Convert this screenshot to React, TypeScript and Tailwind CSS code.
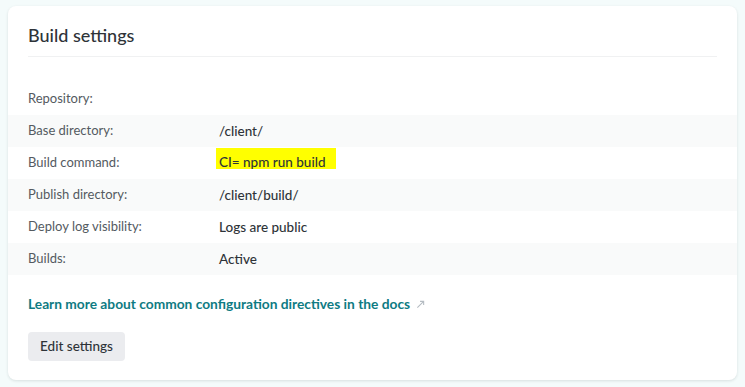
const rows = [
  { label: "Repository:", value: "" },
  { label: "Base directory:", value: "/client/" },
  { label: "Build command:", value: "CI= npm run build", highlight: true },
  { label: "Publish directory:", value: "/client/build/" },
  { label: "Deploy log visibility:", value: "Logs are public" },
  { label: "Builds:", value: "Active" },
];

export default function App() {
  return (
    <div className="min-h-screen bg-[#f4fbfb] px-[8px] pt-[6px] pb-[7px] font-['Lato',sans-serif] text-[#2e3338]">
      <div className="rounded-[8px] bg-white shadow-[0_1px_3px_rgba(14,30,37,0.12)]">
        <div className="px-[20px] pt-[17px]">
          <h2 className="text-[18px] leading-[24px] font-medium text-[#2e3338]">Build settings</h2>
          <div className="mt-[9px] h-px bg-[#f0f1f2]" />
        </div>
        <dl className="mt-[26px]">
          {rows.map((row, i) => (
            <div
              key={row.label}
              className={`flex h-[32px] items-center px-[20px] text-[13px] ${i % 2 === 1 ? "bg-[#f9fafa]" : "bg-white"}`}
            >
              <dt className="w-[191px] text-[#545a61]">{row.label}</dt>
              {row.highlight ? (
                <dd className="-ml-[3px] mt-[1px] self-start">
                  <span className="block h-[21px] w-[120px] bg-[#ffff00] pt-[6px] pl-[3px] text-[13.5px] leading-[16px] font-medium text-[#2e3338]">{row.value}</span>
                </dd>
              ) : (
                <dd className="text-[13.5px] font-medium text-[#2e3338]">{row.value}</dd>
              )}
            </div>
          ))}
        </dl>
        <div className="px-[20px] pt-[20px] pb-[19px]">
          <a href="#" className="flex items-center gap-[6px] text-[13.75px] leading-[18px] font-bold text-[#0e7b83]">
            Learn more about common configuration directives in the docs
            <svg width="9" height="9" viewBox="0 0 10 10" fill="none" stroke="#b5bcc2" strokeWidth="1.2">
              <path d="M1.5 8.5 8.5 1.5M4.5 1.5h4v4" />
            </svg>
          </a>
          <button className="mt-[19px] h-[29px] w-[97px] rounded-[4px] bg-[#ebecef] text-[13.5px] font-medium text-[#2e3338]">
            Edit settings
          </button>
        </div>
      </div>
    </div>
  );
}
